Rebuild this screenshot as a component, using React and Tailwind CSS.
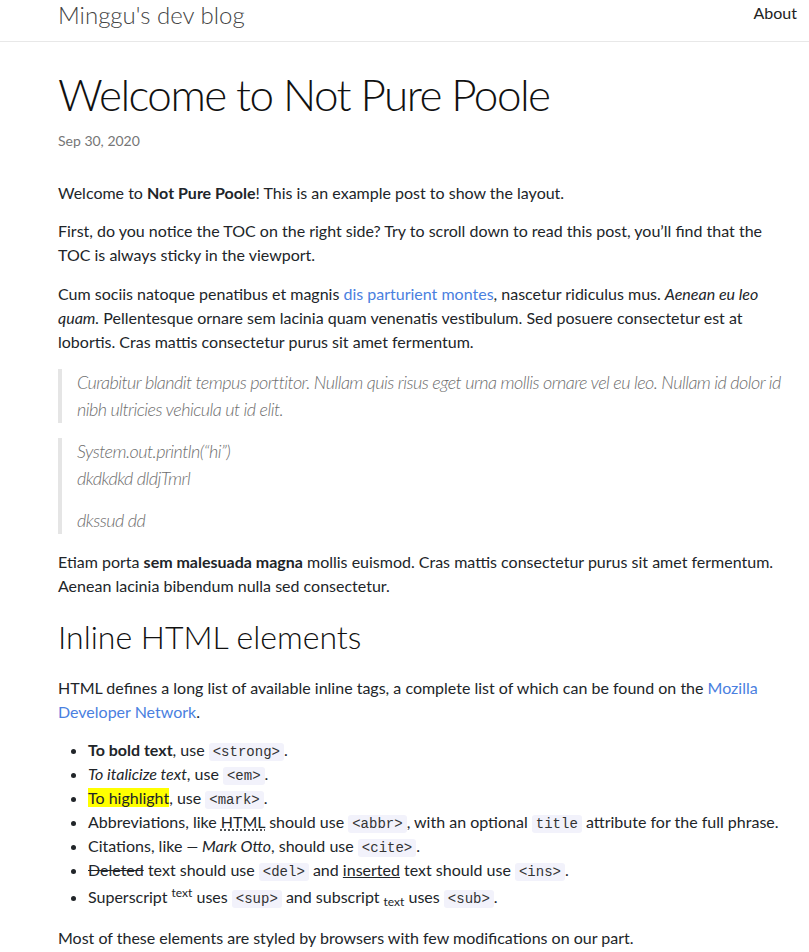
import React from 'react';

const body = { fontFamily: 'Lato, "Noto Sans", sans-serif' };

const Code = ({ children }) => (
  <code className="rounded-[3px] bg-[#f2f2fb] px-[4px] py-[1px] text-[14px] leading-none text-[#333]" style={{ fontFamily: '"Liberation Mono", monospace' }}>
    {children}
  </code>
);

export default function App() {
  return (
    <div className="min-h-screen bg-white text-[16px] leading-[24px] text-[#212529]" style={body}>
      {/* Masthead */}
      <header className="flex h-[42px] items-start justify-between border-b border-[#e8e8e8] pl-[58px] pr-[12px]">
        <a className="text-[24px] font-light leading-[30px] text-[#444]">Minggu's dev blog</a>
        <a className="pt-[1px] text-[16px] leading-[24px] text-[#222]">About</a>
      </header>

      <main className="pl-[58px] pr-[12px]">
        <h1 className="mt-[25px] text-[44px] font-light leading-[55px] tracking-[-0.035em] text-[#111]">Welcome to Not Pure Poole</h1>
        <div className="mt-[8px] text-[14px] leading-[21px] text-[#767676]">Sep 30, 2020</div>

        <div className="mt-[30px]">
          <p className="mb-[14px]">
            Welcome to <strong className="font-bold">Not Pure Poole</strong>! This is an example post to show the layout.
          </p>
          <p className="mb-[15px]">
            First, do you notice the TOC on the right side? Try to scroll down to read this post, you’ll find that the TOC is always sticky in the viewport.
          </p>
          <p className="mb-[15px]">
            Cum sociis natoque penatibus et magnis <a className="text-[#4a80e0]">dis parturient montes</a>, nascetur ridiculus mus. <em>Aenean eu leo quam.</em> Pellentesque ornare sem lacinia quam venenatis vestibulum. Sed posuere consectetur est at lobortis. Cras mattis consectetur purus sit amet fermentum.
          </p>

          <blockquote className="mb-[15px] border-l-4 border-[#e5e5e5] pl-[15px] text-[18px] font-light italic leading-[27px] tracking-[-0.03em] text-[#6e6e6e]">
            <p>Curabitur blandit tempus porttitor. Nullam quis risus eget urna mollis ornare vel eu leo. Nullam id dolor id nibh ultricies vehicula ut id elit.</p>
          </blockquote>

          <blockquote className="mb-[16px] border-l-4 border-[#e5e5e5] pl-[15px] text-[18px] font-light italic leading-[27px] tracking-[-0.03em] text-[#6e6e6e]">
            <p className="mb-[15px]">
              System.out.println(“hi”)
              <br />
              dkdkdkd dldjTmrl
            </p>
            <p>dkssud dd</p>
          </blockquote>

          <p className="mb-[15px]">
            Etiam porta <strong className="font-bold">sem malesuada magna</strong> mollis euismod. Cras mattis consectetur purus sit amet fermentum. Aenean lacinia bibendum nulla sed consectetur.
          </p>

          <h2 className="mt-[19px] text-[32px] font-light leading-[40px] text-[#111]">Inline HTML elements</h2>

          <p className="mt-[19px] mb-[14px]">
            HTML defines a long list of available inline tags, a complete list of which can be found on the <a className="text-[#4a80e0]">Mozilla Developer Network</a>.
          </p>

          <ul className="mb-[15px] list-disc pl-[30px]">
            <li>
              <strong className="font-bold">To bold text</strong>, use <Code>&lt;strong&gt;</Code>.
            </li>
            <li>
              <em>To italicize text</em>, use <Code>&lt;em&gt;</Code>.
            </li>
            <li>
              <mark className="bg-[#ffff00] text-[#212529]">To highlight</mark>, use <Code>&lt;mark&gt;</Code>.
            </li>
            <li>
              Abbreviations, like <abbr className="underline decoration-dotted underline-offset-2" title="HyperText Markup Language">HTML</abbr> should use <Code>&lt;abbr&gt;</Code>, with an optional <Code>title</Code> attribute for the full phrase.
            </li>
            <li>
              Citations, like <cite>— Mark Otto</cite>, should use <Code>&lt;cite&gt;</Code>.
            </li>
            <li>
              <del>Deleted</del> text should use <Code>&lt;del&gt;</Code> and <ins className="underline">inserted</ins> text should use <Code>&lt;ins&gt;</Code>.
            </li>
            <li className="leading-[29px]">
              Superscript <sup className="text-[12px]">text</sup> uses <Code>&lt;sup&gt;</Code> and subscript <sub className="text-[12px]">text</sub> uses <Code>&lt;sub&gt;</Code>.
            </li>
          </ul>

          <p>Most of these elements are styled by browsers with few modifications on our part.</p>
        </div>
      </main>
    </div>
  );
}
